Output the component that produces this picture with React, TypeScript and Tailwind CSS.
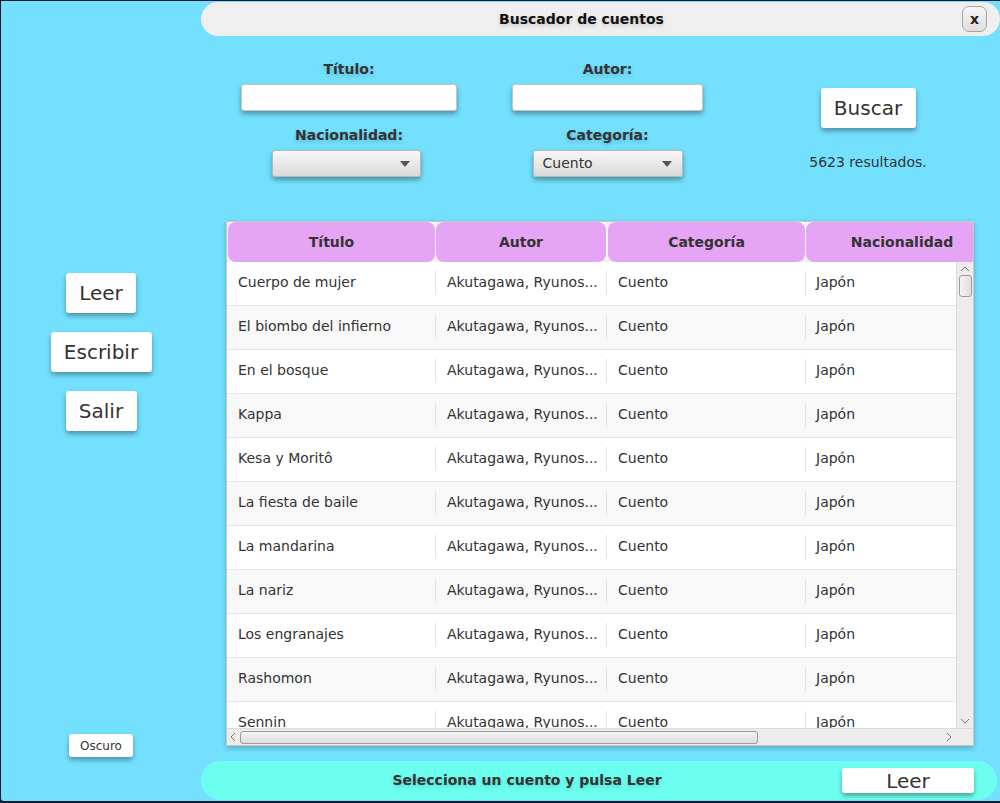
import React from "react";

const FONT = { fontFamily: '"DejaVu Sans", "Liberation Sans", sans-serif' };

const ROWS = [
  "Cuerpo de mujer",
  "El biombo del infierno",
  "En el bosque",
  "Kappa",
  "Kesa y Moritô",
  "La fiesta de baile",
  "La mandarina",
  "La nariz",
  "Los engranajes",
  "Rashomon",
  "Sennin",
];

const label = "text-[14px] font-bold text-[#333] leading-[20px] [text-shadow:0_2px_4px_rgba(0,0,0,0.18)]";
const btnShadow = "shadow-[0_3px_5px_rgba(0,0,0,0.35)]";

function Combo({ value, width }: { value?: string; width: string }) {
  return (
    <div
      className={`${width} h-[27px] flex items-center justify-between pl-[9px] pr-[10px] rounded-[3px] border border-[#b8b8b8] bg-gradient-to-b from-[#f8f8f8] to-[#dadada] ${btnShadow}`}
    >
      <span className="text-[14px] text-[#333]">{value ?? ""}</span>
      <svg width="10" height="6" viewBox="0 0 10 6">
        <path d="M0 0 L10 0 L5 6 Z" fill="#555" />
      </svg>
    </div>
  );
}

function Btn({ children, className }: { children: React.ReactNode; className: string }) {
  return (
    <button
      className={`bg-white rounded-[3px] text-[#333] flex items-center justify-center ${btnShadow} ${className}`}
    >
      {children}
    </button>
  );
}

export default function App() {
  return (
    <div style={FONT} className="w-[1000px] h-[803px] bg-[#0b1c30] pt-px pl-px pb-[2px] overflow-hidden">
      <div className="h-full bg-[#73e0fe] flex flex-col rounded-bl-[3px]">
        {/* Title bar */}
        <div className="h-[35px] pt-px pl-[200px]">
          <div className="h-[34px] bg-[#efefef] rounded-full flex items-center">
            <div className="flex-1 text-center text-[14px] font-bold text-[#111] [text-shadow:0_2px_4px_rgba(0,0,0,0.18)]">
              Buscador de cuentos
            </div>
            <button className="w-[25px] h-[26px] mr-[13px] rounded-[7px] border border-[#a5a5a5] bg-gradient-to-b from-[#f6f6f6] to-[#dedede] text-[14px] font-bold text-[#222] leading-none flex items-center justify-center">
              x
            </button>
          </div>
        </div>

        {/* Search form */}
        <div className="h-[185px] pl-[225px] flex">
          <div className="w-[246px] flex flex-col items-center pt-[23px]">
            <div className={label}>Título:</div>
            <div className={`mt-[5px] w-[216px] h-[27px] bg-white rounded-[3px] border border-[#c4c4c4] ${btnShadow}`} />
            <div className={`mt-[14px] ${label}`}>Nacionalidad:</div>
            <div className="mt-[5px] mr-[5px]">
              <Combo width="w-[149px]" />
            </div>
          </div>
          <div className="w-[271px] flex flex-col items-center pt-[23px]">
            <div className={label}>Autor:</div>
            <div className={`mt-[5px] w-[191px] h-[27px] bg-white rounded-[3px] border border-[#c4c4c4] ${btnShadow}`} />
            <div className={`mt-[14px] ${label}`}>Categoría:</div>
            <div className="mt-[5px]">
              <Combo value="Cuento" width="w-[150px]" />
            </div>
          </div>
          <div className="w-[250px] flex flex-col items-center pt-[52px]">
            <Btn className="w-[95px] h-[40px] text-[20px]">Buscar</Btn>
            <div className="mt-[24px] text-[14px] text-[#333]">5623 resultados.</div>
          </div>
        </div>

        {/* Middle */}
        <div className="h-[540px] flex">
          <div className="w-[200px] flex flex-col items-center pt-[52px] pb-[4px]">
            <Btn className="w-[70px] h-[40px] text-[20px]">Leer</Btn>
            <Btn className="mt-[19px] w-[101px] h-[40px] text-[20px]">Escribir</Btn>
            <Btn className="mt-[19px] w-[71px] h-[40px] text-[20px]">Salir</Btn>
            <Btn className="mt-auto w-[64px] h-[23px] text-[12px]">Oscuro</Btn>
          </div>

          <div className="ml-[25px] w-[748px] h-[525px] bg-white border border-[#c8c8c8] shadow-[0_2px_5px_rgba(0,0,0,0.25)] flex flex-col overflow-hidden">
            {/* Header */}
            <div className="h-[40px] bg-[#f2f2f2] flex shrink-0 overflow-hidden">
              {[
                ["Título", "ml-px w-[207px]"],
                ["Autor", "ml-px w-[170px]"],
                ["Categoría", "ml-[2px] w-[197px]"],
                ["Nacionalidad", "ml-px w-[192px]"],
              ].map(([t, c]) => (
                <div
                  key={t}
                  className={`${c} shrink-0 h-full bg-[#e6a5f4] rounded-[8px] flex items-center justify-center text-[14px] font-bold text-[#333]`}
                >
                  {t}
                </div>
              ))}
            </div>

            {/* Body */}
            <div className="flex-1 flex min-h-0">
              <div className="flex-1 overflow-hidden">
                {ROWS.map((r, i) => (
                  <div
                    key={r}
                    className={`h-[44px] shrink-0 flex items-center pb-[2px] border-b border-[#e6e6e6] text-[14px] text-[#333] ${
                      i % 2 === 1 ? "bg-[#f8f8f8]" : "bg-white"
                    }`}
                  >
                    <div className="w-[208px] shrink-0 pl-[11px] whitespace-nowrap">{r}</div>
                    <div className="w-px h-[24px] bg-[#e2e2e2]" />
                    <div className="w-[170px] shrink-0 pl-[11px] whitespace-nowrap">Akutagawa, Ryunos...</div>
                    <div className="w-px h-[24px] bg-[#e2e2e2]" />
                    <div className="w-[198px] shrink-0 pl-[11px]">Cuento</div>
                    <div className="w-px h-[24px] bg-[#e2e2e2]" />
                    <div className="pl-[10px]">Japón</div>
                  </div>
                ))}
              </div>
              {/* Vertical scrollbar */}
              <div className="w-[17px] bg-[#ececec] border-l border-[#dcdcdc] flex flex-col items-center">
                <svg width="10" height="6" viewBox="0 0 10 6" className="mt-[4px]">
                  <path d="M1 5 L5 1 L9 5" fill="none" stroke="#777" strokeWidth="1" />
                </svg>
                <div className="mt-[3px] w-[13px] h-[22px] rounded-[3px] border border-[#9c9c9c] bg-gradient-to-r from-[#f4f4f4] to-[#dedede]" />
                <svg width="10" height="6" viewBox="0 0 10 6" className="mt-auto mb-[4px]">
                  <path d="M1 1 L5 5 L9 1" fill="none" stroke="#777" strokeWidth="1" />
                </svg>
              </div>
            </div>

            {/* Horizontal scrollbar */}
            <div className="h-[17px] flex shrink-0 bg-[#ececec] border-t border-[#dcdcdc]">
              <div className="flex-1 flex items-center">
                <svg width="6" height="10" viewBox="0 0 6 10" className="ml-[3px]">
                  <path d="M5 1 L1 5 L5 9" fill="none" stroke="#777" strokeWidth="1" />
                </svg>
                <div className="ml-[4px] w-[518px] h-[13px] rounded-[3px] border border-[#9c9c9c] bg-gradient-to-b from-[#f4f4f4] to-[#dedede]" />
                <svg width="6" height="10" viewBox="0 0 6 10" className="ml-auto mr-[4px]">
                  <path d="M1 1 L5 5 L1 9" fill="none" stroke="#777" strokeWidth="1" />
                </svg>
              </div>
              <div className="w-[17px] bg-[#ececec]" />
            </div>
          </div>
        </div>

        {/* Bottom bar */}
        <div className="pl-[200px]">
          <div className="w-[796px] h-[39px] bg-[#6cfff0] rounded-full flex items-center">
            <div className="flex-1 pl-[11px] text-center text-[14px] font-bold text-[#333] [text-shadow:0_2px_4px_rgba(0,0,0,0.18)]">
              Selecciona un cuento y pulsa Leer
            </div>
            <Btn className="mr-[23px] w-[132px] h-[25px] text-[20px] leading-none">Leer</Btn>
          </div>
        </div>
      </div>
    </div>
  );
}
